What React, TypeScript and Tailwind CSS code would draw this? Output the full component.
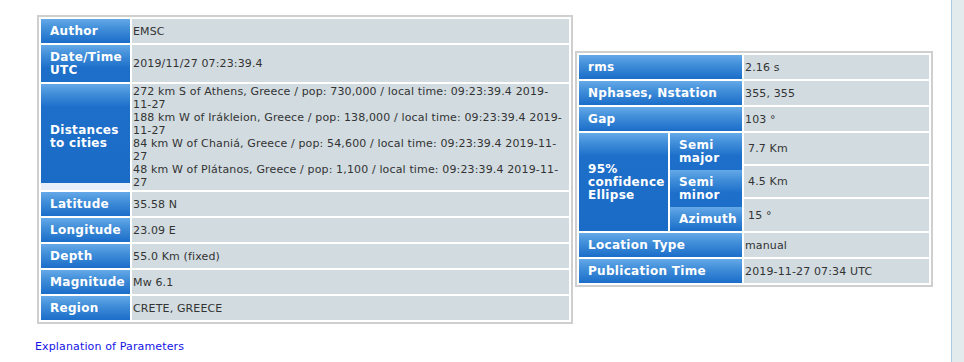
import React from 'react';

const headBg =
  'bg-[linear-gradient(to_bottom,#65a9e8_0px,#4390da_9px,#1d6fca_23px,#1a6bc6_99px,#e6eefa_99px)]';

const HeadCell: React.FC<{ className?: string; children: React.ReactNode }> = ({ className = '', children }) => (
  <div
    className={`${headBg} flex items-center pl-[9px] text-white font-bold text-[12px] leading-[13px] tracking-[0.3px] ${className}`}
  >
    <div>{children}</div>
  </div>
);

const ValueCell: React.FC<{ className?: string; children: React.ReactNode }> = ({ className = '', children }) => (
  <div
    className={`bg-[#d1dbe0] flex items-center pl-[1px] text-[#333] text-[11px] leading-[13px] tracking-[0.14px] ${className}`}
  >
    <div>{children}</div>
  </div>
);

const leftRows: { label: React.ReactNode; value: React.ReactNode; h: string }[] = [
  { label: 'Author', value: 'EMSC', h: 'h-[24px]' },
  { label: <>Date/Time<br />UTC</>, value: '2019/11/27 07:23:39.4', h: 'h-[37px]' },
];

const distances = [
  '272 km S of Athens, Greece / pop: 730,000 / local time: 09:23:39.4 2019-',
  '11-27',
  '188 km W of Irákleion, Greece / pop: 138,000 / local time: 09:23:39.4 2019-',
  '11-27',
  '84 km W of Chaniá, Greece / pop: 54,600 / local time: 09:23:39.4 2019-11-',
  '27',
  '48 km W of Plátanos, Greece / pop: 1,100 / local time: 09:23:39.4 2019-11-',
  '27',
];

const lowerRows = [
  ['Latitude', '35.58 N'],
  ['Longitude', '23.09 E'],
  ['Depth', '55.0 Km (fixed)'],
  ['Magnitude', 'Mw 6.1'],
  ['Region', 'CRETE, GREECE'],
];

export default function App() {
  return (
    <div className="flex h-[362px] w-full bg-white font-['DejaVu_Sans',Verdana,sans-serif]">
      <div className="flex-1 pl-[35px] pt-[15px]">
        <div className="flex items-start">
          {/* left table */}
          <div className="ml-[2px] border-2 border-[#cfcfcf] p-[2px] flex flex-col gap-[2px]">
            {leftRows.map((r, i) => (
              <div key={i} className={`flex gap-[2px] ${r.h}`}>
                <HeadCell className="w-[89px]">{r.label}</HeadCell>
                <ValueCell className="w-[437px]">{r.value}</ValueCell>
              </div>
            ))}
            <div className="flex gap-[2px] h-[106px]">
              <HeadCell className="w-[89px]">
                Distances
                <br />
                to cities
              </HeadCell>
              <ValueCell className="w-[437px]">
                {distances.map((l, i) => (
                  <div key={i} className="whitespace-nowrap">
                    {l}
                  </div>
                ))}
              </ValueCell>
            </div>
            {lowerRows.map(([k, v]) => (
              <div key={k} className="flex gap-[2px] h-[24px]">
                <HeadCell className="w-[89px]">{k}</HeadCell>
                <ValueCell className="w-[437px]">{v}</ValueCell>
              </div>
            ))}
          </div>

          {/* right table */}
          <div className="ml-[2px] mt-[36px] border-2 border-[#cfcfcf] p-[2px] flex flex-col gap-[2px]">
            {[
              ['rms', '2.16 s'],
              ['Nphases, Nstation', '355, 355'],
              ['Gap', '103 °'],
            ].map(([k, v]) => (
              <div key={k} className="flex gap-[2px] h-[24px]">
                <HeadCell className="w-[163px]">{k}</HeadCell>
                <ValueCell className="w-[185px]">{v}</ValueCell>
              </div>
            ))}
            <div className="flex gap-[2px] h-[98px]">
              <HeadCell className="w-[89px]">
                95%
                <br />
                confidence
                <br />
                Ellipse
              </HeadCell>
              <div className="w-[72px] flex flex-col">
                <HeadCell className="h-[37px]">
                  Semi
                  <br />
                  major
                </HeadCell>
                <HeadCell className="h-[37px]">
                  Semi
                  <br />
                  minor
                </HeadCell>
                <HeadCell className="h-[24px]">Azimuth</HeadCell>
              </div>
              <div className="w-[185px] flex flex-col gap-[2px]">
                <ValueCell className="h-[31px] pl-[4px]">7.7 Km</ValueCell>
                <ValueCell className="h-[31px] pl-[4px]">4.5 Km</ValueCell>
                <ValueCell className="h-[32px] pl-[4px]">15 °</ValueCell>
              </div>
            </div>
            {[
              ['Location Type', 'manual'],
              ['Publication Time', '2019-11-27 07:34 UTC'],
            ].map(([k, v]) => (
              <div key={k} className="flex gap-[2px] h-[24px]">
                <HeadCell className="w-[163px]">{k}</HeadCell>
                <ValueCell className="w-[185px]">{v}</ValueCell>
              </div>
            ))}
          </div>
        </div>

        <a href="#" className="mt-[16px] block text-[11px] leading-[13px] tracking-[0.14px] text-[#1414e6]">
          Explanation of Parameters
        </a>
      </div>
      <div className="w-[13px] border-l border-[#a9cbe6] bg-[#e3ebec]" />
    </div>
  );
}
